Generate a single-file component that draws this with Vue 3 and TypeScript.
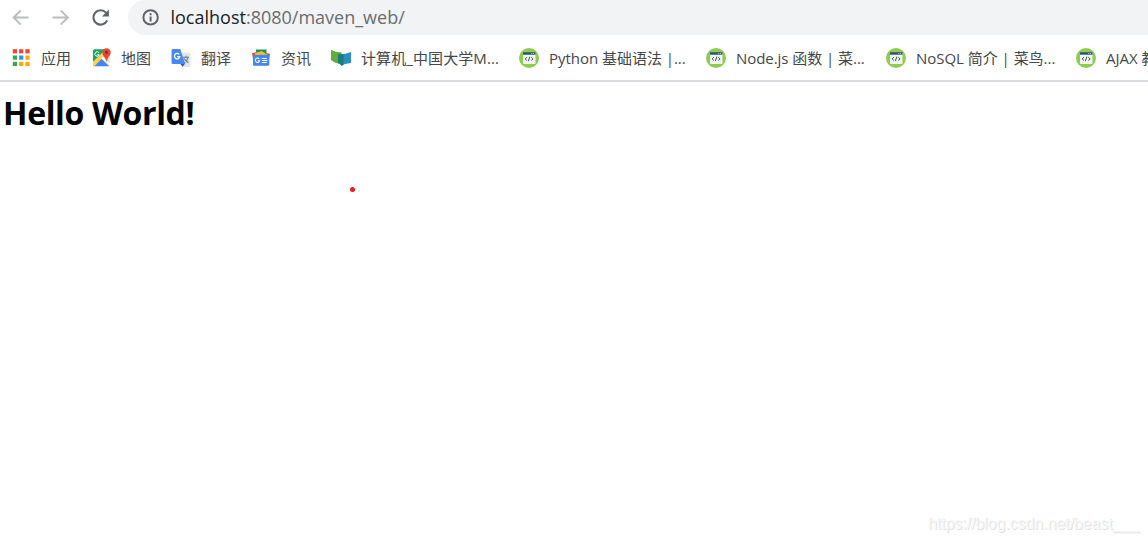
<script setup lang="ts">
type IconKind = 'apps' | 'maps' | 'translate' | 'news' | 'mooc' | 'runoob'

interface Bookmark {
  icon: IconKind
  label: string
  width: number
  spacing: number
}

const bookmarks: Bookmark[] = [
  { icon: 'apps', label: '应用', width: 30, spacing: 0 },
  { icon: 'maps', label: '地图', width: 30, spacing: 0 },
  { icon: 'translate', label: '翻译', width: 30, spacing: 0 },
  { icon: 'news', label: '资讯', width: 30, spacing: 0 },
  { icon: 'mooc', label: '计算机_中国大学M...', width: 138, spacing: 0.1 },
  { icon: 'runoob', label: 'Python 基础语法 |...', width: 137, spacing: -0.03 },
  { icon: 'runoob', label: 'Node.js 函数 | 菜...', width: 130, spacing: -0.05 },
  { icon: 'runoob', label: 'NoSQL 简介 | 菜鸟...', width: 140, spacing: -0.03 },
  { icon: 'runoob', label: 'AJAX 教程 | 菜鸟...', width: 140, spacing: 0 },
]

const appColors = ['#f44336', '#f44336', '#f44336', '#34a853', '#2196f3', '#fbab00', '#34a853', '#fbab00', '#fbab00']
</script>

<template>
  <div class="browser">
    <header class="toolbar">
      <svg class="nav" viewBox="0 0 20 20"><path d="M17.5 10.5H2.8M9.8 3.3 2.6 10.5l7.2 7.2" /></svg>
      <svg class="nav" viewBox="0 0 20 20"><path d="M1.5 10.5h15M9.7 3.3l7.2 7.2-7.2 7.2" /></svg>
      <svg class="nav reload" viewBox="0 0 20 20">
        <path d="M16.2 13.4A7.2 7.2 0 1 1 15 5.6" />
        <path class="solid" d="M17.9 2.6v7h-7z" />
      </svg>
      <div class="address">
        <svg class="info" viewBox="0 0 18 18">
          <circle cx="8.6" cy="9.4" r="7.2" />
          <path d="M8.6 8.4v5M8.6 5.3v1.9" />
        </svg>
        <span class="url"><span class="host">localhost</span>:8080/maven_web/</span>
      </div>
    </header>

    <nav class="bookmarks">
      <div v-for="(b, i) in bookmarks" :key="i" class="bookmark">
        <svg v-if="b.icon === 'apps'" class="icon" viewBox="0 0 20 20">
          <rect
            v-for="(c, n) in appColors"
            :key="n"
            :x="1.8 + (n % 3) * 6.3"
            :y="1.2 + Math.floor(n / 3) * 6.3"
            width="4.2"
            height="4.2"
            :fill="c"
          />
        </svg>
        <svg v-else-if="b.icon === 'maps'" class="icon" viewBox="0 0 20 20">
          <rect x="2" y="1.2" width="17" height="17" rx="1.5" fill="#e3e6e8" />
          <path d="M3.5 1.2H15L2 14V2.7q0-1.5 1.5-1.5z" fill="#1fa463" />
          <path d="M2 14 14 2.8l2.6 4.4L3.5 18.2H2z" fill="#ffd04c" />
          <path d="m3.5 18.2 7.2-7.4 7.4 7.4z" fill="#4285f4" />
          <path d="m10.2 10.3 1.7-1.7 7.1 7.2v2z" fill="#fff" />
          <path d="M7.9 4.7A2.2 2.2 0 1 0 8.2 6.8H6.3" fill="none" stroke="#fff" stroke-width="1" />
          <path d="M15.5.2a4.2 4.2 0 0 0-4.2 4.2c0 3.6 3.8 4.6 4.2 10 .4-5.4 4.2-6.4 4.2-10A4.2 4.2 0 0 0 15.5.2z" fill="#ea4335" />
          <circle cx="15.5" cy="4.2" r="1.5" fill="#8d2922" />
        </svg>
        <svg v-else-if="b.icon === 'translate'" class="icon" viewBox="0 0 20 20">
          <path d="M8 4.5h10q1.5 0 1.5 1.5v11.5q0 1.5-1.5 1.5h-6z" fill="#e4e5e8" />
          <path d="M12 9.2h6M15 7.8v1.4M17 9.4c-.6 3-2.4 4.5-4 5.5M13.2 10.5c.7 2 2.3 3.2 4.2 4.2" fill="none" stroke="#607d8b" stroke-width="1.1" />
          <path d="m9 15.6 5.2-.2-2.6 3.4z" fill="#3457b2" />
          <path d="M2 .9h7.2l5 15H2Q.5 15.9.5 14.4v-12Q.5.9 2 .9z" fill="#4787f3" />
          <path d="M8.2 6.4a2.7 2.7 0 1 0 .6 2.3H6.1" fill="none" stroke="#fff" stroke-width="1.3" />
        </svg>
        <svg v-else-if="b.icon === 'news'" class="icon" viewBox="0 0 20 20">
          <path d="M5 1.5h10.5v8H5z" fill="#149b59" />
          <path d="m1 5.2 9-2.2 1.2 7-9 2z" fill="#ea4335" />
          <path d="m9 4.2 10 1.6-1.2 7H8z" fill="#ea4335" />
          <path d="m4 5 7-1.8 5 3.3v4H3z" fill="#fcc02c" />
          <rect x="2" y="6.8" width="16.3" height="11" rx="1.2" fill="#4285f4" />
          <path d="M8.3 10.9a2.2 2.2 0 1 0 .4 1.8H6.7M10.8 10.5h5M10.8 12.5h5.6M10.8 14.5h5" fill="none" stroke="#fff" stroke-width="1.1" />
        </svg>
        <svg v-else-if="b.icon === 'mooc'" class="icon" viewBox="0 0 20 20">
          <path d="M0 1.8q5 2.9 10.5 2.5v11.3Q4 15.8 0 12z" fill="#62ad39" />
          <path d="M7 6.1q6 .8 13-2v10.8q-7 .8-9.5 2.8Q9.5 15.8 7 15z" fill="#2e8dc2" />
          <path d="M7 6.1q2 .3 5.6.1v10.4l-2.1 1.1Q9.5 15.8 7 15z" fill="#168079" />
        </svg>
        <svg v-else class="icon" viewBox="0 0 20 20">
          <circle cx="10" cy="10" r="10" fill="#8fcb50" />
          <rect x="4" y="4.5" width="12.5" height="11.5" rx=".8" fill="#f0f3ee" />
          <path d="M4 4.2h12.5v2.5H4z" fill="#28536a" />
          <path d="M12.4 5.5h.8M14.2 5.5h.8" stroke="#fff" stroke-width=".8" />
          <path d="M7.9 9.2 6.1 10.9l1.8 1.6M12.3 9.2l1.8 1.7-1.8 1.6M10.8 8.7l-1.4 4.4" fill="none" stroke="#3d5660" stroke-width="1" />
        </svg>
        <span class="label" :style="{ width: b.width + 'px', letterSpacing: b.spacing + 'px' }">{{ b.label }}</span>
      </div>
    </nav>

    <main class="page">
      <h1>Hello World!</h1>
      <i class="pointer"></i>
      <span class="watermark">https://blog.csdn.net/beast___</span>
    </main>
  </div>
</template>

<style>
body {
  margin: 0;
  background: #fff;
}
</style>

<style scoped>
.browser {
  display: flex;
  flex-direction: column;
  width: 1148px;
  height: 542px;
  overflow: hidden;
  background: #fff;
  font-family: "Open Sans", "Noto Sans CJK SC", sans-serif;
}
.toolbar {
  display: flex;
  flex: none;
  gap: 20px;
  height: 35px;
  padding-left: 11px;
}
.nav {
  flex: none;
  width: 20px;
  height: 20px;
  margin-top: 7px;
  fill: none;
  stroke: #babcbe;
  stroke-width: 1.9;
}
.reload {
  stroke: #5f6368;
  stroke-width: 2.1;
}
.reload .solid {
  fill: #5f6368;
  stroke: none;
}
.address {
  display: flex;
  flex: 1;
  height: 35px;
  margin-left: -3px;
  padding-left: 14px;
  background: #f1f3f4;
  border-radius: 18px 0 0 18px;
}
.info {
  flex: none;
  width: 18px;
  height: 18px;
  margin: 8px 10.5px 0 0;
  fill: none;
  stroke: #5f6368;
  stroke-width: 2;
}
.url {
  color: #6a6d71;
  font-size: 18px;
  line-height: 35px;
  white-space: nowrap;
}
.host {
  color: #202124;
}
.bookmarks {
  display: flex;
  flex: none;
  gap: 20px;
  height: 45px;
  padding-left: 11px;
  border-bottom: 2px solid #dadce0;
}
.bookmark {
  display: flex;
  flex: none;
  gap: 10px;
}
.icon {
  flex: none;
  width: 20px;
  height: 20px;
  margin-top: 13px;
}
.label {
  color: #44474b;
  font-size: 15px;
  line-height: 46px;
  white-space: nowrap;
}
.page {
  position: relative;
  flex: 1;
}
h1 {
  margin: 9px 0 0 3px;
  color: #000;
  font-size: 32px;
  font-weight: 700;
  letter-spacing: -0.35px;
  line-height: 44px;
}
.pointer {
  position: absolute;
  top: 104.5px;
  left: 349.5px;
  width: 5px;
  height: 5px;
  border-radius: 50%;
  background: #ed1c24;
}
.watermark {
  position: absolute;
  right: 9px;
  bottom: 8px;
  color: #f7f7f7;
  font: 16px/20px "Liberation Sans", Arial, sans-serif;
  letter-spacing: -0.08px;
  text-shadow: 1px 1px 0 #e2e2e2;
}
</style>
